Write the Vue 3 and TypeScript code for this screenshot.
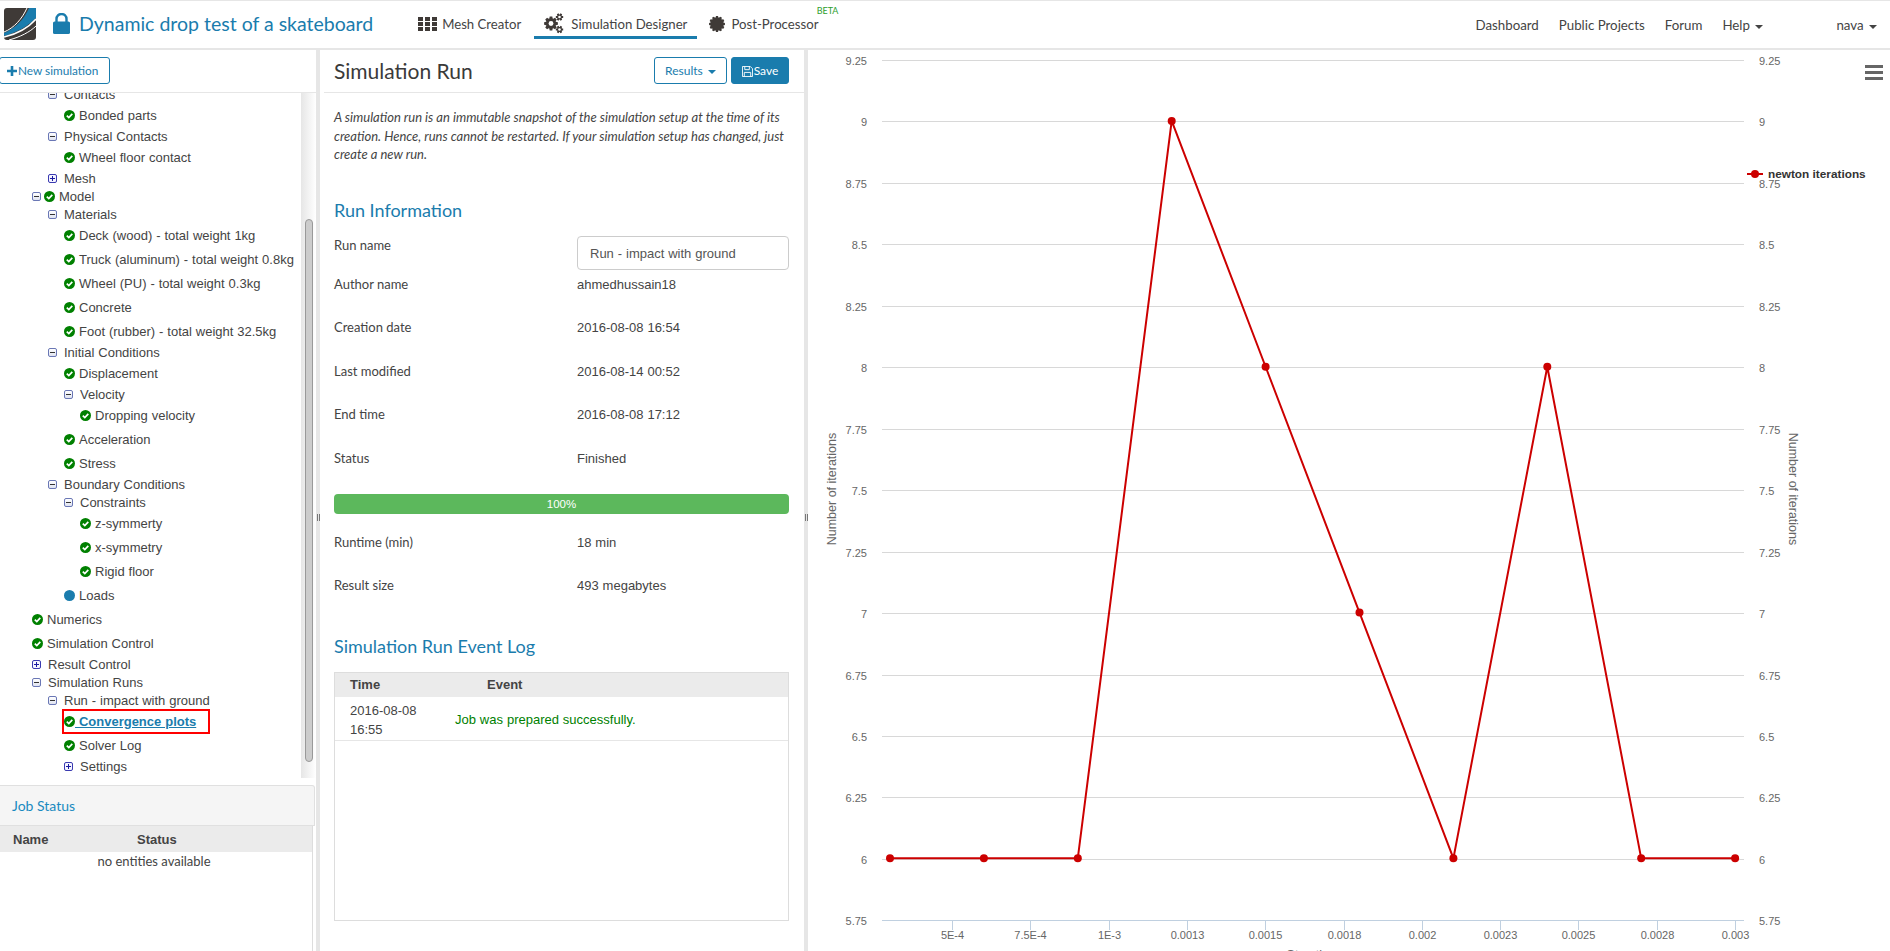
<script setup lang="ts">
interface TreeRow {
  label: string
  depth: number
  kind: 'leaf' | 'open' | 'closed' | 'both' | 'pending' | 'link'
}

const treeRows: TreeRow[] = [
  { label: 'Contacts', depth: 1, kind: 'open' },
  { label: 'Bonded parts', depth: 2, kind: 'leaf' },
  { label: 'Physical Contacts', depth: 1, kind: 'open' },
  { label: 'Wheel floor contact', depth: 2, kind: 'leaf' },
  { label: 'Mesh', depth: 1, kind: 'closed' },
  { label: 'Model', depth: 0, kind: 'both' },
  { label: 'Materials', depth: 1, kind: 'open' },
  { label: 'Deck (wood) - total weight 1kg', depth: 2, kind: 'leaf' },
  { label: 'Truck (aluminum) - total weight 0.8kg', depth: 2, kind: 'leaf' },
  { label: 'Wheel (PU) - total weight 0.3kg', depth: 2, kind: 'leaf' },
  { label: 'Concrete', depth: 2, kind: 'leaf' },
  { label: 'Foot (rubber) - total weight 32.5kg', depth: 2, kind: 'leaf' },
  { label: 'Initial Conditions', depth: 1, kind: 'open' },
  { label: 'Displacement', depth: 2, kind: 'leaf' },
  { label: 'Velocity', depth: 2, kind: 'open' },
  { label: 'Dropping velocity', depth: 3, kind: 'leaf' },
  { label: 'Acceleration', depth: 2, kind: 'leaf' },
  { label: 'Stress', depth: 2, kind: 'leaf' },
  { label: 'Boundary Conditions', depth: 1, kind: 'open' },
  { label: 'Constraints', depth: 2, kind: 'open' },
  { label: 'z-symmerty', depth: 3, kind: 'leaf' },
  { label: 'x-symmetry', depth: 3, kind: 'leaf' },
  { label: 'Rigid floor', depth: 3, kind: 'leaf' },
  { label: 'Loads', depth: 2, kind: 'pending' },
  { label: 'Numerics', depth: 0, kind: 'leaf' },
  { label: 'Simulation Control', depth: 0, kind: 'leaf' },
  { label: 'Result Control', depth: 0, kind: 'closed' },
  { label: 'Simulation Runs', depth: 0, kind: 'open' },
  { label: 'Run - impact with ground', depth: 1, kind: 'open' },
  { label: 'Convergence plots', depth: 2, kind: 'link' },
  { label: 'Solver Log', depth: 2, kind: 'leaf' },
  { label: 'Settings', depth: 2, kind: 'closed' }
]

const hasToggle = (r: TreeRow) => ['open', 'closed', 'both'].includes(r.kind)
const hasCheck = (r: TreeRow) => ['leaf', 'both', 'link'].includes(r.kind)

const infoRows = [
  ['Author name', 'ahmedhussain18'],
  ['Creation date', '2016-08-08 16:54'],
  ['Last modified', '2016-08-14 00:52'],
  ['End time', '2016-08-08 17:12'],
  ['Status', 'Finished']
]
const resultRows = [
  ['Runtime (min)', '18 min'],
  ['Result size', '493 megabytes']
]

// chart coordinates are page pixels, the svg viewBox starts at the panel corner
const yOf = (v: number) => 920.3 - (v - 5.75) * 245.8
const yTicks = ['5.75', '6', '6.25', '6.5', '6.75', '7', '7.25', '7.5', '7.75', '8', '8.25', '8.5', '8.75', '9', '9.25'].map((label) => ({
  label,
  y: Math.round(yOf(parseFloat(label))) + 0.5
}))
const xLabels = ['5E-4', '7.5E-4', '1E-3', '0.0013', '0.0015', '0.0018', '0.002', '0.0023', '0.0025', '0.0028', '0.003']
const xTicks = xLabels.map((label, i) => ({ label, x: Math.round(952 + i * 78.3) + 0.5 }))
const values = [6, 6, 6, 9, 8, 7, 6, 8, 6, 6]
const points = values.map((v, i) => ({ x: 890 + i * 93.9, y: yOf(v) - 0.5 }))
const linePoints = points.map((p) => `${p.x},${p.y}`).join(' ')

function gear(cx: number, cy: number, r1: number, r2: number, teeth: number): string {
  const out: string[] = []
  const step = (Math.PI * 2) / teeth
  for (let i = 0; i < teeth; i++) {
    const a = i * step
    const offsets: [number, number][] = [
      [-0.3, r1],
      [-0.17, r2],
      [0.17, r2],
      [0.3, r1]
    ]
    for (const [o, r] of offsets) {
      const t = a + o * step * 1.4
      out.push(`${(cx + Math.cos(t) * r).toFixed(2)},${(cy + Math.sin(t) * r).toFixed(2)}`)
    }
  }
  return out.join(' ')
}

const gearBig = gear(7, 10.5, 5.2, 7, 8)
const gearTop = gear(15.5, 4, 2.6, 3.8, 6)
const gearBottom = gear(15.5, 16.5, 2.6, 3.8, 6)
const gearSolid = gear(8, 9, 6.6, 8, 12)
</script>

<template>
  <div class="page">
    <header class="topbar">
      <svg class="logo" viewBox="0 0 32 32" aria-hidden="true">
        <rect width="32" height="32" rx="3" fill="#3f3a37" />
        <path d="M0 25 C10 21 20 12 25 0 L32 0 L32 10 C24 18 12 25 0 28 Z" fill="#1a7cad" />
        <path d="M0 24 C10 20 18 11 23 0" fill="none" stroke="#fff" stroke-width="1" />
        <path d="M0 29 C13 26 25 19 32 11" fill="none" stroke="#fff" stroke-width="1.5" />
        <path d="M5 32 C16 29 26 24 32 18" fill="none" stroke="#fff" stroke-width="1" />
      </svg>
      <svg class="lock" viewBox="0 0 17 21" aria-hidden="true">
        <path d="M3.5 9 V6 a5 5 0 0 1 10 0 V9" fill="none" stroke="#1a7cad" stroke-width="2.4" />
        <rect y="8.5" width="17" height="12.5" rx="1.6" fill="#1a7cad" />
      </svg>
      <h1 class="title">Dynamic drop test of a skateboard</h1>
      <nav class="modules">
        <a class="module module--mesh">
          <svg class="grid-icon" viewBox="0 0 19 14" aria-hidden="true">
            <g fill="#3f3a37">
              <rect width="5" height="4" /><rect x="7" width="5" height="4" /><rect x="14" width="5" height="4" />
              <rect y="5" width="5" height="4" /><rect x="7" y="5" width="5" height="4" /><rect x="14" y="5" width="5" height="4" />
              <rect y="10" width="5" height="4" /><rect x="7" y="10" width="5" height="4" /><rect x="14" y="10" width="5" height="4" />
            </g>
          </svg>
          Mesh Creator
        </a>
        <a class="module module--active">
          <svg class="gears-icon" viewBox="0 0 20 21" aria-hidden="true">
            <polygon :points="gearBig" fill="#3f3a37" />
            <circle cx="7" cy="10.5" r="2.4" fill="#fff" />
            <polygon :points="gearTop" fill="#3f3a37" />
            <circle cx="15.5" cy="4" r="1.3" fill="#fff" />
            <polygon :points="gearBottom" fill="#3f3a37" />
            <circle cx="15.5" cy="16.5" r="1.3" fill="#fff" />
          </svg>
          Simulation Designer
        </a>
        <a class="module module--post">
          <svg class="post-icon" viewBox="0 0 16 18" aria-hidden="true">
            <polygon :points="gearSolid" fill="#3f3a37" />
          </svg>
          Post-Processor
          <span class="beta">BETA</span>
        </a>
      </nav>
      <nav class="links">
        <a>Dashboard</a>
        <a>Public Projects</a>
        <a>Forum</a>
        <a>Help <i class="caret"></i></a>
        <a class="user">nava <i class="caret"></i></a>
      </nav>
    </header>

    <main class="workspace">
      <aside class="sidebar">
        <div class="sidebar__tools">
          <button class="btn btn--new" type="button">
            <svg class="plus" viewBox="0 0 10 10" aria-hidden="true"><path d="M3.7 0 H6.3 V3.7 H10 V6.3 H6.3 V10 H3.7 V6.3 H0 V3.7 H3.7 Z" /></svg>New simulation
          </button>
        </div>
        <div class="tree-wrap">
          <ul class="tree">
            <li
              v-for="row in treeRows"
              :key="row.label"
              :class="['tree__row', { 'tree__row--short': hasToggle(row) }]"
              :style="{ paddingLeft: 32 + row.depth * 16 + 'px' }"
            >
              <span v-if="hasToggle(row)" :class="['toggle', { 'toggle--plus': row.kind === 'closed' }]">
                <svg viewBox="0 0 9 9" aria-hidden="true">
                  <path d="M2 4.5 H7" />
                  <path v-if="row.kind === 'closed'" d="M4.5 2 V7" />
                </svg>
              </span>
              <svg v-if="hasCheck(row)" class="check" viewBox="0 0 11 11" aria-hidden="true">
                <circle cx="5.5" cy="5.5" r="5.5" fill="#008000" />
                <path d="M2.8 5.6 L4.8 7.5 L8.3 3.8" fill="none" stroke="#fff" stroke-width="1.7" />
              </svg>
              <span v-if="row.kind === 'pending'" class="dot"></span>
              <span v-if="row.kind === 'link'" class="tree__link-box">
                <a class="tree__link">&nbsp;{{ row.label }}</a>
              </span>
              <span v-else class="tree__label">{{ row.label }}</span>
            </li>
          </ul>
          <div class="scrollbar"><div class="scrollbar__thumb"></div></div>
        </div>
        <section class="jobs">
          <h3 class="jobs__head">Job Status</h3>
          <div class="jobs__table">
            <div class="jobs__columns"><span>Name</span><span>Status</span></div>
            <p class="jobs__empty">no entities available</p>
          </div>
        </section>
      </aside>

      <div class="splitter"><span class="splitter__grip"></span></div>

      <section class="run">
        <div class="run__head">
          <h2 class="run__title">Simulation Run</h2>
          <div class="run__actions">
            <button class="btn btn--results" type="button">Results <i class="caret caret--blue"></i></button>
            <button class="btn btn--save" type="button">
              <svg class="save-icon" viewBox="0 0 12 12" aria-hidden="true">
                <path d="M.5 .5 H9 L11.5 3 V11.5 H.5 Z" fill="none" stroke="#fff" />
                <path d="M3 .5 V4 H8 V.5 M2.5 11.5 V7 H9.5 V11.5" fill="none" stroke="#fff" />
              </svg>Save
            </button>
          </div>
        </div>
        <div class="run__body">
          <p class="intro">
            A simulation run is an immutable snapshot of the simulation setup at the time of its creation. Hence, runs
            cannot be restarted. If your simulation setup has changed, just create a new run.
          </p>
          <h3 class="section-title section-title--info">Run Information</h3>
          <div class="name-row">
            <label class="field-label">Run name</label>
            <input class="name-input" type="text" value="Run - impact with ground" />
          </div>
          <div v-for="r in infoRows" :key="r[0]" class="info-row">
            <span class="field-label">{{ r[0] }}</span>
            <span class="field-value">{{ r[1] }}</span>
          </div>
          <div class="progress">100%</div>
          <div class="result-rows">
            <div v-for="r in resultRows" :key="r[0]" class="info-row">
              <span class="field-label">{{ r[0] }}</span>
              <span class="field-value">{{ r[1] }}</span>
            </div>
          </div>
          <h3 class="section-title section-title--log">Simulation Run Event Log</h3>
          <div class="log">
            <div class="log__head"><span>Time</span><span>Event</span></div>
            <div class="log__row">
              <span class="log__time">2016-08-08 16:55</span>
              <span class="log__msg">Job was prepared successfully.</span>
            </div>
          </div>
        </div>
      </section>

      <div class="splitter"><span class="splitter__grip"></span></div>

      <section class="chart">
        <svg class="chart__svg" viewBox="808 50 1082 901" width="1082" height="901">
          <line v-for="t in yTicks.slice(1)" :key="t.label" x1="882" x2="1744" :y1="t.y" :y2="t.y" stroke="#d8d8d8" />
          <line x1="882" x2="1744" :y1="yTicks[0].y" :y2="yTicks[0].y" stroke="#c0d0e0" />
          <line v-for="t in xTicks" :key="t.label" :x1="t.x" :x2="t.x" y1="920" y2="930" stroke="#c0d0e0" />
          <g class="axis-label">
            <text v-for="t in yTicks" :key="t.label" x="867" :y="t.y + 4" text-anchor="end">{{ t.label }}</text>
            <text v-for="t in yTicks" :key="'r' + t.label" x="1759" :y="t.y + 4">{{ t.label }}</text>
            <text v-for="t in xTicks" :key="t.label" :x="t.x" y="939" text-anchor="middle">{{ t.label }}</text>
            <text class="axis-title" transform="translate(836 489) rotate(-90)" text-anchor="middle">Number of iterations</text>
            <text class="axis-title" transform="translate(1789 489) rotate(90)" text-anchor="middle">Number of iterations</text>
            <text class="axis-title" x="1313" y="958.5" text-anchor="middle">Step time</text>
          </g>
          <polyline :points="linePoints" fill="none" stroke="#cc0000" stroke-width="2" />
          <circle v-for="p in points" :key="p.x" :cx="p.x" :cy="p.y" r="4" fill="#cc0000" />
          <line x1="1747" x2="1763" y1="174" y2="174" stroke="#cc0000" stroke-width="2" />
          <circle cx="1755" cy="174" r="4" fill="#cc0000" />
          <text class="legend" x="1768" y="178">newton iterations</text>
          <g fill="#666">
            <rect x="1865" y="65" width="18" height="3" />
            <rect x="1865" y="71" width="18" height="3" />
            <rect x="1865" y="77" width="18" height="3" />
          </g>
        </svg>
      </section>
    </main>
  </div>
</template>

<style>
html,
body {
  margin: 0;
  overflow: hidden;
  background: #fff;
}
</style>

<style scoped>
.page {
  display: flex;
  flex-direction: column;
  height: 951px;
  font-family: Lato, 'Open Sans', sans-serif;
  font-size: 13.3px;
  color: #444;
  overflow: hidden;
}

.topbar {
  display: flex;
  align-items: flex-start;
  box-sizing: border-box;
  height: 50px;
  flex-shrink: 0;
  border-top: 1px solid #e6e6e6;
  border-bottom: 2px solid #e6e6e6;
}

.logo {
  width: 32px;
  height: 32px;
  margin: 7px 0 0 4px;
}

.lock {
  width: 17px;
  height: 21px;
  margin: 12px 0 0 17px;
}

.title {
  margin: 8px 0 0 9px;
  font-size: 19.5px;
  line-height: 30px;
  font-weight: 400;
  color: #1a7cad;
  white-space: nowrap;
}

.modules {
  display: flex;
  gap: 2px;
  margin-left: 35px;
  font-size: 13.2px;
}

.module {
  position: relative;
  display: flex;
  align-items: center;
  box-sizing: content-box;
  height: 25px;
  margin-top: 10px;
  padding: 0 10px;
  border-bottom: 3px solid transparent;
  white-space: nowrap;
}

.module--mesh {
  margin-right: 1px;
}

.module--active {
  border-bottom-color: #1a7cad;
}

.grid-icon {
  width: 19px;
  height: 14px;
  margin-right: 5px;
}

.gears-icon {
  width: 20px;
  height: 21px;
  margin-right: 7px;
}

.post-icon {
  width: 16px;
  height: 18px;
  margin-right: 6px;
}

.beta {
  position: absolute;
  right: -10px;
  top: -6px;
  font-size: 9px;
  color: #2e9e2e;
}

.links {
  display: flex;
  gap: 20px;
  margin: 14px 13px 0 auto;
  line-height: 20px;
}

.user {
  margin-left: 53px;
}

.caret {
  display: inline-block;
  width: 0;
  height: 0;
  margin-left: 2px;
  vertical-align: middle;
  border-top: 4px solid #444;
  border-left: 4px solid transparent;
  border-right: 4px solid transparent;
}

.caret--blue {
  border-top-color: #1a7cad;
}

.workspace {
  display: flex;
  flex: 1;
  min-height: 0;
}

.sidebar {
  display: flex;
  flex-direction: column;
  width: 316px;
  flex-shrink: 0;
}

.sidebar__tools {
  box-sizing: border-box;
  height: 43px;
  flex-shrink: 0;
  padding-top: 7px;
  border-bottom: 1px solid #e6e6e6;
}

.btn {
  box-sizing: border-box;
  height: 27px;
  padding: 0;
  border: 1px solid #1a7cad;
  border-radius: 3px;
  background: #fff;
  color: #1a7cad;
  font-family: Lato, sans-serif;
  font-size: 12px;
}

.btn--new {
  width: 111px;
  margin-left: -1px;
  font-size: 11.8px;
  text-align: left;
  padding-left: 7px;
}

.plus {
  width: 10px;
  height: 10px;
  margin-right: 1px;
  vertical-align: -1px;
  fill: #1a7cad;
}

.tree-wrap {
  display: flex;
  height: 685px;
  flex-shrink: 0;
  overflow: hidden;
}

.tree {
  flex: 1;
  min-width: 0;
  margin: -8px 0 0;
  padding: 0;
  list-style: none;
  font-family: 'Liberation Sans', Arial, sans-serif;
  font-size: 13px;
  word-spacing: 0.3px;
}

.tree__row {
  display: flex;
  align-items: center;
  box-sizing: border-box;
  height: 24px;
  white-space: nowrap;
}

.tree__row--short {
  height: 18px;
}

.toggle {
  display: block;
  box-sizing: border-box;
  width: 9px;
  height: 9px;
  margin-right: 7px;
  border: 1px solid #6a77b5;
  border-radius: 2px;
  background: linear-gradient(#fff, #dfe3f0);
  flex-shrink: 0;
}

.toggle svg {
  display: block;
  width: 9px;
  height: 9px;
  margin: -1px;
  stroke: #333;
  stroke-width: 1;
}

.toggle--plus {
  border-color: #3a3ab0;
  background: #f4f4ff;
}

.toggle--plus svg {
  stroke: #1a1aa0;
}

.toggle + .check {
  margin-left: -4px;
}

.check {
  width: 11px;
  height: 11px;
  margin-right: 4px;
  flex-shrink: 0;
}

.dot {
  width: 11px;
  height: 11px;
  margin-right: 4px;
  border-radius: 50%;
  background: #1a7cad;
  flex-shrink: 0;
}

.tree__link-box {
  position: relative;
}

.tree__link-box::after {
  content: '';
  position: absolute;
  left: -17px;
  top: -5px;
  box-sizing: border-box;
  width: 148px;
  height: 25px;
  border: 2px solid #f00;
}

.tree__link {
  margin-left: -4px;
  color: #1a7cad;
  font-weight: 700;
  text-decoration: underline;
}

.scrollbar {
  width: 15px;
  flex-shrink: 0;
  background: linear-gradient(90deg, #e6e6e6, #fff);
}

.scrollbar__thumb {
  box-sizing: border-box;
  width: 8px;
  height: 543px;
  margin: 126px 0 0 4px;
  border: 1px solid #999;
  border-radius: 4px;
  background: #ccc;
}

.jobs {
  flex: 1;
  margin-top: 7px;
  min-height: 0;
}

.jobs__head {
  box-sizing: border-box;
  width: 315px;
  height: 41px;
  margin: 0;
  padding-left: 12px;
  border: 1px solid #e0e0e0;
  border-width: 1px 1px 1px 0;
  border-radius: 0 3px 0 0;
  background: #f5f5f5;
  color: #1a8ac0;
  font-size: 14px;
  font-weight: 400;
  line-height: 39px;
}

.jobs__table {
  box-sizing: border-box;
  width: 313px;
  height: 125px;
  border-right: 1px solid #ddd;
}

.jobs__columns {
  display: grid;
  grid-template-columns: 124px 1fr;
  height: 26px;
  padding-left: 13px;
  background: #ebebeb;
  font-family: 'Liberation Sans', Arial, sans-serif;
  font-size: 13px;
  font-weight: 700;
  line-height: 27px;
}

.jobs__empty {
  margin: 0;
  padding-right: 4px;
  font-size: 13px;
  text-align: center;
  line-height: 18px;
}

.splitter {
  box-sizing: border-box;
  display: flex;
  align-items: center;
  justify-content: center;
  width: 4px;
  flex-shrink: 0;
  padding-top: 34px;
  background: #e6e6e6;
}

.splitter__grip {
  width: 3px;
  height: 7px;
  border-left: 1px solid #777;
  border-right: 1px solid #777;
  box-sizing: border-box;
}

.run {
  display: flex;
  flex-direction: column;
  width: 480px;
  margin-left: 4px;
  flex-shrink: 0;
}

.run__head {
  display: flex;
  align-items: center;
  justify-content: space-between;
  box-sizing: border-box;
  height: 43px;
  flex-shrink: 0;
  padding: 0 15px 1px 10px;
  border-bottom: 1px solid #e6e6e6;
}

.run__title {
  margin: 0;
  font-size: 21px;
  font-weight: 400;
  color: #3a3a3a;
}

.run__actions {
  display: flex;
  gap: 4px;
}

.btn--results {
  width: 73px;
}

.btn--save {
  width: 58px;
  background: #1a7cad;
  color: #fff;
}

.save-icon {
  width: 11px;
  height: 11px;
  margin-right: 1px;
  vertical-align: -2px;
}

.run__body {
  padding: 0 15px 0 10px;
}

.intro {
  margin: 15px 0 0;
  font-size: 13px;
  font-style: italic;
  line-height: 18.67px;
}

.section-title {
  margin: 0;
  font-size: 18px;
  font-weight: 400;
  line-height: 24px;
  color: #1a7cad;
}

.section-title--info {
  margin-top: 34px;
}

.section-title--log {
  margin-top: 19px;
}

.name-row,
.info-row {
  display: grid;
  grid-template-columns: 243px 1fr;
}

.name-row {
  height: 34px;
  margin-top: 14px;
  line-height: 19px;
}

.field-label {
  font-size: 13px;
}

.info-row {
  align-items: start;
  box-sizing: border-box;
  height: 43.5px;
  padding-top: 4.5px;
  line-height: 19px;
}

.field-value {
  font-family: 'Liberation Sans', Arial, sans-serif;
  font-size: 13px;
  word-spacing: 0.3px;
}

.name-input {
  box-sizing: border-box;
  width: 212px;
  height: 34px;
  padding: 0 12px;
  border: 1px solid #ccc;
  border-radius: 4px;
  color: #555;
  font-family: 'Liberation Sans', Arial, sans-serif;
  font-size: 13px;
  word-spacing: 0.3px;
}

.progress {
  height: 20px;
  margin-top: 6px;
  border-radius: 4px;
  background: #5cb85c;
  color: #fff;
  font-family: 'Liberation Sans', Arial, sans-serif;
  font-size: 11.5px;
  line-height: 20px;
  text-align: center;
}

.result-rows {
  margin-top: 14.5px;
}

.log {
  box-sizing: border-box;
  height: 249px;
  margin-top: 14px;
  border: 1px solid #ddd;
  font-family: 'Liberation Sans', Arial, sans-serif;
  font-size: 13px;
  word-spacing: 0.3px;
}

.log__head {
  display: grid;
  grid-template-columns: 137px 1fr;
  height: 24px;
  padding-left: 15px;
  border-bottom: 2px solid #fff;
  background: #ebebeb;
  box-sizing: content-box;
  font-weight: 700;
  line-height: 23px;
}

.log__row {
  display: grid;
  grid-template-columns: 105px 1fr;
  align-items: center;
  height: 41px;
  padding-left: 15px;
  border-bottom: 1px solid #e6e6e6;
  line-height: 19px;
}

.log__time {
  width: 70px;
}

.log__msg {
  color: #008000;
}

.chart {
  flex: 1;
  min-width: 0;
}

.chart__svg {
  display: block;
}

.axis-label {
  font-family: 'Liberation Sans', Arial, sans-serif;
  font-size: 11px;
  fill: #666;
}

.axis-title {
  font-size: 12.5px;
}

.legend {
  font-family: 'Liberation Sans', Arial, sans-serif;
  font-size: 11.8px;
  font-weight: 700;
  fill: #333;
}
</style>
